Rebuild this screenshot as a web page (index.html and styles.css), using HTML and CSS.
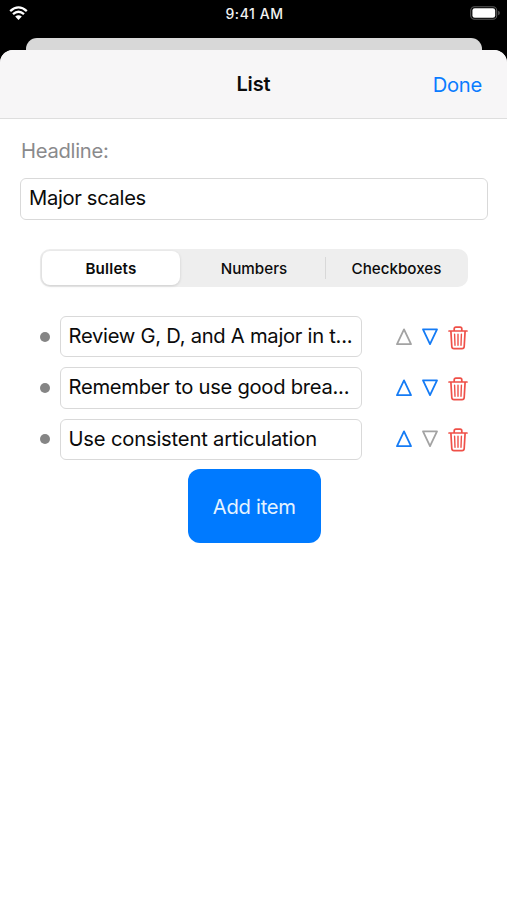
FILE: index.html
```html
<!DOCTYPE html>
<html lang="en">
<head>
<meta charset="utf-8">
<meta name="viewport" content="width=device-width, initial-scale=1">
<title>List</title>
<link rel="stylesheet" href="styles.css">
</head>
<body>
<svg class="symbols" width="0" height="0" aria-hidden="true">
  <symbol id="up" viewBox="0 0 18 18"><path d="M9 1.4 16 16.2H2Z" fill="none" stroke="currentColor" stroke-width="1.8" stroke-linejoin="round"/></symbol>
  <symbol id="down" viewBox="0 0 18 18"><path d="M2 1.3H16L9 16.1Z" fill="none" stroke="currentColor" stroke-width="1.8" stroke-linejoin="round"/></symbol>
  <symbol id="trash" viewBox="0 0 20 24"><g fill="none" stroke="currentColor" stroke-linecap="round" stroke-linejoin="round"><path d="M1 5H19M6.2 4.8V2.8Q6.2 1.1 7.9 1.1H12.1Q13.8 1.1 13.8 2.8V4.8M2.9 5.2 3.8 20.5Q3.9 22.7 6 22.7H14Q16.1 22.7 16.2 20.5L17.1 5.2" stroke-width="1.7"/><path d="M6.6 8.3 7 19.2M10 8.3V19.2M13.4 8.3 13 19.2" stroke-width="1.4"/></g></symbol>
</svg>
<header class="status">
  <svg class="wifi" viewBox="0 0 19 15"><path d="M1.2 5.2Q9.5-2.4 17.8 5.2M4 8.2Q9.5 3.3 15 8.2" fill="none" stroke="#fff" stroke-width="2.3"/><path d="M6.2 10.5Q9.5 7.9 12.8 10.5L9.5 13.9Z" fill="#fff"/></svg>
  <span class="time">9:41 AM</span>
  <svg class="battery" viewBox="0 0 30 14"><rect x=".7" y=".7" width="26" height="12.6" rx="3.8" fill="none" stroke="#5b5b5b" stroke-width="1.1"/><rect x="2.4" y="2.2" width="22.8" height="9.6" rx="2.3" fill="#fff"/><path d="M28.2 4.7Q29.8 5.3 29.8 7T28.2 9.3Z" fill="#5b5b5b"/></svg>
</header>
<div class="backdrop"></div>
<main class="sheet">
  <nav class="navbar"><h1>List</h1><a class="done">Done</a></nav>
  <div class="content">
    <label class="label">Headline:</label>
    <div class="field headline"><span>Major scales</span></div>
    <div class="segments">
      <div class="segment selected"><span>Bullets</span></div>
      <div class="segment"><span>Numbers</span></div>
      <div class="segment divided"><span>Checkboxes</span></div>
    </div>
    <div class="items">
      <div class="item"><i class="bullet"></i><div class="field"><span>Review G, D, and A major in t...</span></div><svg class="arrow up off"><use href="#up"/></svg><svg class="arrow"><use href="#down"/></svg><svg class="trash"><use href="#trash"/></svg></div>
      <div class="item"><i class="bullet"></i><div class="field"><span>Remember to use good brea...</span></div><svg class="arrow up"><use href="#up"/></svg><svg class="arrow"><use href="#down"/></svg><svg class="trash"><use href="#trash"/></svg></div>
      <div class="item"><i class="bullet"></i><div class="field last"><span>Use consistent articulation</span></div><svg class="arrow up"><use href="#up"/></svg><svg class="arrow off"><use href="#down"/></svg><svg class="trash"><use href="#trash"/></svg></div>
    </div>
    <div class="add"><span>Add item</span></div>
  </div>
</main>
</body>
</html>
```

FILE: styles.css
```css
* { box-sizing: border-box; }
body {
  margin: 0;
  height: 900px;
  overflow: hidden;
  display: flex;
  flex-direction: column;
  background: #000;
  color: #0b0b0b;
  font-family: Inter, "Liberation Sans", sans-serif;
  font-size: 20.2px;
  letter-spacing: -0.27px;
  white-space: nowrap;
}
svg { display: block; flex: none; }
.symbols { position: absolute; }
.status {
  height: 38px;
  flex: none;
  display: grid;
  grid-template-columns: 1fr auto 1fr;
  align-items: start;
  padding: 5px 7px 0 9px;
}
.wifi { width: 19px; height: 15px; margin-top: 1px; }
.time {
  color: #f2f2f2;
  font-size: 14px;
  font-weight: 500;
  line-height: 17px;
  letter-spacing: 0.55px;
}
.battery { width: 30px; height: 14px; margin-top: 1px; justify-self: end; }
.backdrop {
  height: 24px;
  flex: none;
  margin: 0 25px 0 26px;
  border-radius: 11px 11px 0 0;
  background: #d8d8d8;
}
.sheet {
  flex: 1;
  margin-top: -12px;
  border-radius: 13px 13px 0 0;
  background: #fff;
  overflow: hidden;
}
.navbar {
  height: 69px;
  display: grid;
  grid-template-columns: 1fr auto 1fr;
  align-items: center;
  padding: 0 25px;
  background: #f7f6f7;
  border-bottom: 1px solid #dedede;
}
.navbar h1 {
  grid-column: 2;
  margin: 0;
  font-size: 20px;
  font-weight: 600;
  letter-spacing: -0.1px;
}
.done { justify-self: end; color: #0a7cff; }
.content { padding: 19px 20px 0; }
.label { display: block; line-height: 26px; padding-left: 1px; color: #8a8a8c; }
.field {
  height: 41.5px;
  border: 1.3px solid #d9d9d9;
  border-radius: 6px;
  padding: 0 8px;
  line-height: 38px;
}
.headline { margin-top: 14px; width: 468px; letter-spacing: -0.33px; }
.segments {
  width: 428px;
  height: 38px;
  margin: 29.5px 0 0 20px;
  padding: 2px;
  display: grid;
  grid-template-columns: 138px 1fr 141px;
  border-radius: 10px;
  background: #eee;
}
.segment {
  display: flex;
  align-items: center;
  justify-content: center;
  font-size: 15.2px;
  font-weight: 500;
  letter-spacing: 0;
}
.segment:nth-child(2) { padding-left: 3px; }
.selected {
  border-radius: 8px;
  background: #fff;
  font-weight: 600;
  letter-spacing: 0.2px;
  box-shadow: 0 1px 3px rgba(0, 0, 0, 0.14);
}
.divided {
  padding-left: 2px;
  background: linear-gradient(#d8d8d8, #d8d8d8) left center / 1px 22px no-repeat;
}
.items { display: grid; gap: 10px; margin-top: 29px; }
.item { display: flex; align-items: center; height: 41.3px; padding-left: 20px; }
.bullet { width: 10px; height: 10px; border-radius: 50%; background: #858585; margin-right: 9.5px; }
.item .field { width: 302px; }
.last { letter-spacing: -0.18px; }
.arrow { width: 18px; height: 18px; margin-left: 8px; color: #147bf5; }
.up { margin-left: 33.5px; }
.off { color: #a3a3a3; }
.trash { width: 20px; height: 24px; margin: 2px 0 0 9px; color: #ef5048; }
.add {
  width: 132.5px;
  height: 74px;
  margin: 9.5px 0 0 168px;
  border-radius: 12px;
  background: #007aff;
  color: #e4f3ff;
  display: flex;
  align-items: center;
  justify-content: center;
}
```
